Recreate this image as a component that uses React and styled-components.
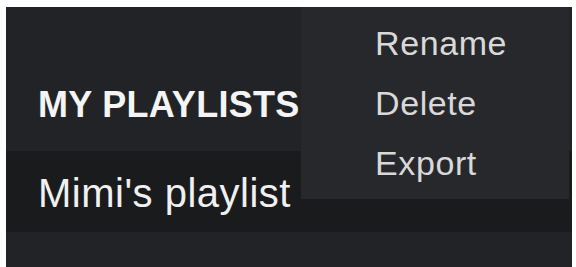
import React from 'react';
import styled, { createGlobalStyle } from 'styled-components';

const GlobalStyle = createGlobalStyle`
  html, body {
    margin: 0;
    padding: 0;
    background: #ffffff;
  }
  body {
    font-family: "Liberation Sans", Arial, sans-serif;
  }
`;

const Sidebar = styled.div`
  position: relative;
  margin: 7px 4px 0 6px;
  height: 260px;
  background: #222326;
  overflow: hidden;
`;

const SectionTitle = styled.div`
  box-sizing: border-box;
  height: 144px;
  padding: 80px 0 0 32px;
  font-size: 36px;
  line-height: 36px;
  font-weight: 700;
  letter-spacing: 0.3px;
  color: #f4f4f4;
  white-space: nowrap;
`;

const PlaylistRow = styled.div`
  box-sizing: border-box;
  height: 81px;
  padding: 22px 0 0 32px;
  background: ${(p) => (p.$active ? '#1a1b1d' : 'transparent')};
  font-size: 40px;
  line-height: 40px;
  letter-spacing: 0.5px;
  color: #f0f0f0;
  white-space: nowrap;
`;

const Menu = styled.ul`
  position: absolute;
  top: 0;
  left: 295px;
  width: 268px;
  height: 192px;
  box-sizing: border-box;
  margin: 0;
  padding: 6px 0 0 74px;
  list-style: none;
  background: #27282b;
`;

const MenuItem = styled.li`
  height: 60px;
  font-size: 34px;
  line-height: 60px;
  letter-spacing: 0.6px;
  color: #d9d9d9;
  cursor: pointer;
`;

const menuItems = ['Rename', 'Delete', 'Export'];

export default function App() {
  return (
    <>
      <GlobalStyle />
      <Sidebar>
        <SectionTitle>MY PLAYLISTS</SectionTitle>
        <PlaylistRow $active>Mimi's playlist</PlaylistRow>
        <Menu>
          {menuItems.map((label) => (
            <MenuItem key={label}>{label}</MenuItem>
          ))}
        </Menu>
      </Sidebar>
    </>
  );
}
